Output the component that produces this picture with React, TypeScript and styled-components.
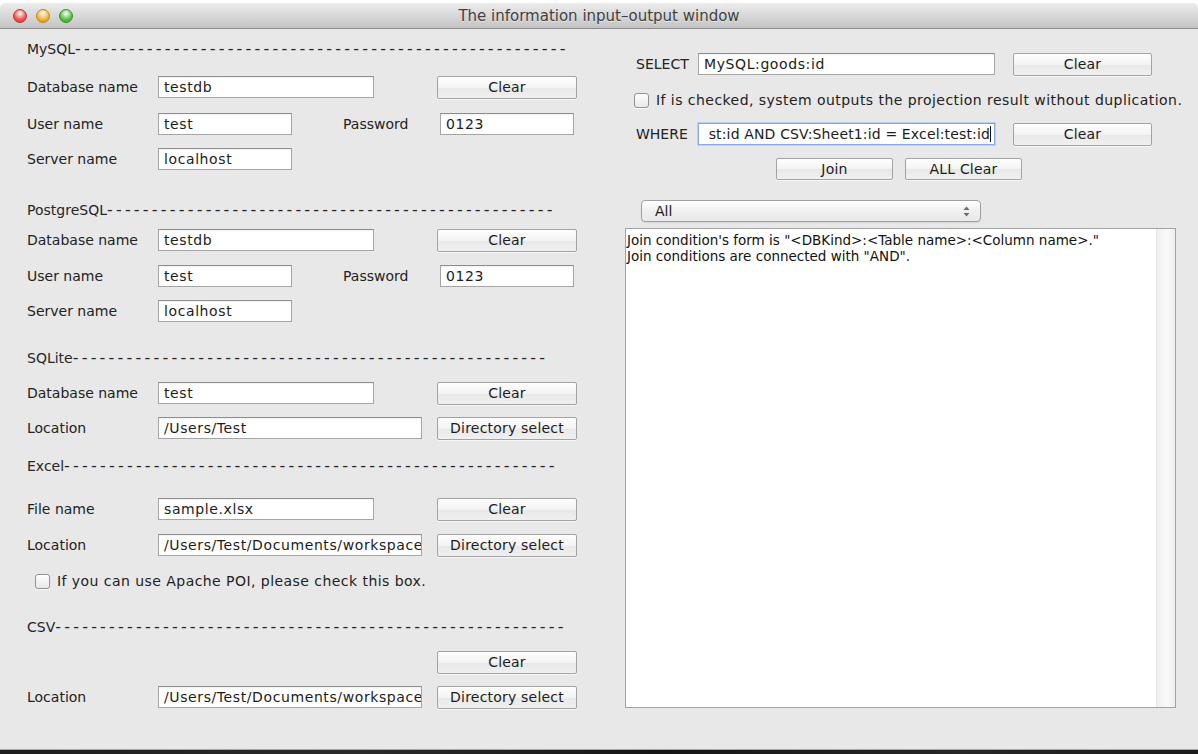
import styled, { createGlobalStyle } from "styled-components";

const GlobalStyle = createGlobalStyle`
  html, body {
    margin: 0;
    padding: 0;
    background: #fff;
  }
  body {
    font-family: "DejaVu Sans", "Liberation Sans", sans-serif;
    font-size: 14px;
    color: #1c1c1c;
  }
  * { box-sizing: border-box; }
`;

const Window = styled.div`
  width: 1198px;
  height: 754px;
  padding-top: 3px;
  display: flex;
  flex-direction: column;
  overflow: hidden;
  background: #fff;
`;

const TitleBar = styled.div`
  flex: none;
  height: 26px;
  display: grid;
  grid-template-columns: 1fr auto 1fr;
  align-items: center;
  background: linear-gradient(#ececec, #d6d6d6 55%, #c3c3c3);
  border-bottom: 1px solid #8c8c8c;
  border-radius: 5px 5px 0 0;
`;

const Lights = styled.div`
  display: flex;
  gap: 9px;
  padding-left: 13px;
`;

const Light = styled.span<{ $c: string; $edge: string }>`
  width: 14px;
  height: 14px;
  border-radius: 50%;
  border: 1px solid ${(p) => p.$edge};
  background: radial-gradient(circle at 50% 30%, #fff 0, ${(p) => p.$c} 55%, ${(p) => p.$edge} 100%);
`;

const Title = styled.div`
  font-size: 15px;
  color: #404040;
  text-shadow: 0 1px 0 rgba(255, 255, 255, 0.5);
`;

const Body = styled.div`
  flex: 1;
  display: flex;
  background: #e8e8e8;
`;

const BottomEdge = styled.div`
  flex: none;
  height: 5px;
  border-top: 1px solid #a6a6a6;
  background: linear-gradient(90deg, #1d1d1d, #2a2a2a 30%, #151515 55%, #262626 80%, #1b1b1b);
`;

const LeftPanel = styled.div`
  width: 600px;
  padding: 8px 0 0 27px;
  display: flex;
  flex-direction: column;
`;

const RightPanel = styled.div`
  flex: 1;
  display: flex;
  flex-direction: column;
`;

const Header = styled.div<{ $mt: number }>`
  display: flex;
  align-items: baseline;
  height: 24px;
  line-height: 24px;
  margin-top: ${(p) => p.$mt}px;
  white-space: nowrap;
  color: #262626;
`;

const Dashes = styled.span`
  font-size: 16px;
  letter-spacing: 3.2px;
`;

const Row = styled.div<{ $mt: number; $w?: number; $ml?: number; $end?: boolean }>`
  display: flex;
  align-items: center;
  height: 24px;
  width: ${(p) => p.$w ?? 550}px;
  margin-top: ${(p) => p.$mt}px;
  margin-left: ${(p) => p.$ml ?? 0}px;
  justify-content: ${(p) => (p.$end ? "flex-end" : "flex-start")};
`;

const Label = styled.span<{ $w?: number; $ml?: number }>`
  flex: none;
  width: ${(p) => p.$w ?? 131}px;
  margin-left: ${(p) => p.$ml ?? 0}px;
  white-space: nowrap;
  color: #222;
`;

const TextBox = styled.div<{ $w: number; $focus?: boolean }>`
  flex: none;
  width: ${(p) => p.$w}px;
  height: 22px;
  padding: 0 ${(p) => (p.$focus ? 3 : 5)}px;
  line-height: 20px;
  letter-spacing: ${(p) => (p.$focus ? 0.15 : 0.6)}px;
  white-space: nowrap;
  overflow: hidden;
  background: #fff;
  border: 1px solid ${(p) => (p.$focus ? "#89ace0" : "#a5a5a5")};
  border-top-color: ${(p) => (p.$focus ? "#7fa3da" : "#8e8e8e")};
  box-shadow: ${(p) =>
    p.$focus ? "0 0 0 1px rgba(150, 190, 240, 0.55)" : "inset 0 1px 1px rgba(0, 0, 0, 0.06)"};
  display: flex;
  justify-content: ${(p) => (p.$focus ? "flex-end" : "flex-start")};
`;

const Caret = styled.span`
  flex: none;
  width: 1px;
  height: 16px;
  margin-top: 2px;
  background: #111;
`;

const PushButton = styled.button<{ $w?: number }>`
  flex: none;
  margin-left: auto;
  width: ${(p) => p.$w ?? 140}px;
  height: 23px;
  padding: 0;
  font: inherit;
  letter-spacing: 0.2px;
  color: #1c1c1c;
  background: linear-gradient(#fefefe, #f3f3f3 50%, #e8e8e8 52%, #f0f0f0);
  border: 1px solid #a3a3a3;
  border-radius: 2px;
  box-shadow: 0 1px 0 rgba(255, 255, 255, 0.6);
`;

const ButtonPair = styled.div`
  display: flex;
  justify-content: center;
  gap: 12px;
  margin-top: 12px;
  height: 22px;

  ${PushButton} {
    margin-left: 0;
    height: 22px;
  }
`;

const CheckLine = styled.div<{ $mt: number; $ml: number }>`
  display: flex;
  align-items: center;
  height: 18px;
  margin-top: ${(p) => p.$mt}px;
  margin-left: ${(p) => p.$ml}px;
  letter-spacing: 0.45px;
  white-space: nowrap;
  color: #222;
`;

const CheckBox = styled.span`
  flex: none;
  width: 15px;
  height: 15px;
  margin-right: 7px;
  border: 1px solid #929292;
  border-radius: 3px;
  background: linear-gradient(#ffffff, #e8e8e8);
  box-shadow: 0 1px 0 rgba(255, 255, 255, 0.7);
`;

const Select = styled.div`
  display: flex;
  align-items: center;
  justify-content: space-between;
  width: 340px;
  height: 22px;
  margin: 20px 0 0 41px;
  padding: 0 10px 0 13px;
  border: 1px solid #a0a0a0;
  border-radius: 4px;
  background: linear-gradient(#ffffff, #f0f0f0 50%, #e9e9e9);
  box-shadow: 0 1px 1px rgba(0, 0, 0, 0.08);
`;

const OutputArea = styled.div`
  display: flex;
  width: 551px;
  height: 480px;
  margin: 6px 0 0 25px;
  background: #fff;
  border: 1px solid #a2a2a2;
`;

const OutputText = styled.div`
  flex: 1;
  padding: 3px 0 0 1px;
  line-height: 16px;
  font-size: 13.5px;
  white-space: pre;
  color: #111;
`;

const ScrollTrack = styled.div`
  flex: none;
  width: 19px;
  border-left: 1px solid #e2e2e2;
  background: linear-gradient(90deg, #efefef, #f9f9f9 45%, #f9f9f9 60%, #ededed);
`;

function SelectArrows() {
  return (
    <svg width="7" height="11" viewBox="0 0 7 11">
      <path d="M3.5 0.5 L6.5 4 H0.5 Z" fill="#6a6a6a" />
      <path d="M3.5 10.5 L6.5 7 H0.5 Z" fill="#6a6a6a" />
    </svg>
  );
}

function SectionTitle({ name, dashes, mt }: { name: string; dashes: number; mt: number }) {
  return (
    <Header $mt={mt}>
      {name}
      <Dashes>{"-".repeat(dashes)}</Dashes>
    </Header>
  );
}

export default function App() {
  return (
    <>
      <GlobalStyle />
      <Window>
        <TitleBar>
          <Lights>
            <Light $c="#f25b55" $edge="#b8342f" />
            <Light $c="#f5b53b" $edge="#c0861d" />
            <Light $c="#5fc54b" $edge="#3b8f2e" />
          </Lights>
          <Title>The information input–output window</Title>
          <div />
        </TitleBar>

        <Body>
          <LeftPanel>
            <SectionTitle name="MySQL" dashes={55} mt={0} />
            <Row $mt={14}>
              <Label>Database name</Label>
              <TextBox $w={216}>testdb</TextBox>
              <PushButton>Clear</PushButton>
            </Row>
            <Row $mt={13}>
              <Label>User name</Label>
              <TextBox $w={134}>test</TextBox>
              <Label $w={97} $ml={51}>Password</Label>
              <TextBox $w={134}>0123</TextBox>
            </Row>
            <Row $mt={11}>
              <Label>Server name</Label>
              <TextBox $w={134}>localhost</TextBox>
            </Row>

            <SectionTitle name="PostgreSQL" dashes={50} mt={27} />
            <Row $mt={6}>
              <Label>Database name</Label>
              <TextBox $w={216}>testdb</TextBox>
              <PushButton>Clear</PushButton>
            </Row>
            <Row $mt={12}>
              <Label>User name</Label>
              <TextBox $w={134}>test</TextBox>
              <Label $w={97} $ml={51}>Password</Label>
              <TextBox $w={134}>0123</TextBox>
            </Row>
            <Row $mt={11}>
              <Label>Server name</Label>
              <TextBox $w={134}>localhost</TextBox>
            </Row>

            <SectionTitle name="SQLite" dashes={53} mt={23} />
            <Row $mt={11}>
              <Label>Database name</Label>
              <TextBox $w={216}>test</TextBox>
              <PushButton>Clear</PushButton>
            </Row>
            <Row $mt={11}>
              <Label>Location</Label>
              <TextBox $w={264}>/Users/Test</TextBox>
              <PushButton>Directory select</PushButton>
            </Row>

            <SectionTitle name="Excel" dashes={55} mt={14} />
            <Row $mt={19}>
              <Label>File name</Label>
              <TextBox $w={216}>sample.xlsx</TextBox>
              <PushButton>Clear</PushButton>
            </Row>
            <Row $mt={12}>
              <Label>Location</Label>
              <TextBox $w={264}>/Users/Test/Documents/workspace</TextBox>
              <PushButton>Directory select</PushButton>
            </Row>
            <CheckLine $mt={15} $ml={8}>
              <CheckBox />
              If you can use Apache POI, please check this box.
            </CheckLine>

            <SectionTitle name="CSV" dashes={57} mt={25} />
            <Row $mt={11} $end>
              <PushButton>Clear</PushButton>
            </Row>
            <Row $mt={11}>
              <Label>Location</Label>
              <TextBox $w={264}>/Users/Test/Documents/workspace</TextBox>
              <PushButton>Directory select</PushButton>
            </Row>
          </LeftPanel>

          <RightPanel>
            <Row $mt={23} $ml={36} $w={516}>
              <Label $w={62}>SELECT</Label>
              <TextBox $w={297}>MySQL:goods:id</TextBox>
              <PushButton $w={139}>Clear</PushButton>
            </Row>
            <CheckLine $mt={15} $ml={34}>
              <CheckBox />
              If is checked, system outputs the projection result without duplication.
            </CheckLine>
            <Row $mt={13} $ml={36} $w={516}>
              <Label $w={62}>WHERE</Label>
              <TextBox $w={297} $focus>
                st:id AND CSV:Sheet1:id = Excel:test:id
                <Caret />
              </TextBox>
              <PushButton $w={139}>Clear</PushButton>
            </Row>
            <ButtonPair>
              <PushButton $w={117}>Join</PushButton>
              <PushButton $w={117}>ALL Clear</PushButton>
            </ButtonPair>
            <Select>
              <span>All</span>
              <SelectArrows />
            </Select>
            <OutputArea>
              <OutputText>
                {'Join condition\'s form is "<DBKind>:<Table name>:<Column name>."\nJoin conditions are connected with "AND".'}
              </OutputText>
              <ScrollTrack />
            </OutputArea>
          </RightPanel>
        </Body>
        <BottomEdge />
      </Window>
    </>
  );
}
